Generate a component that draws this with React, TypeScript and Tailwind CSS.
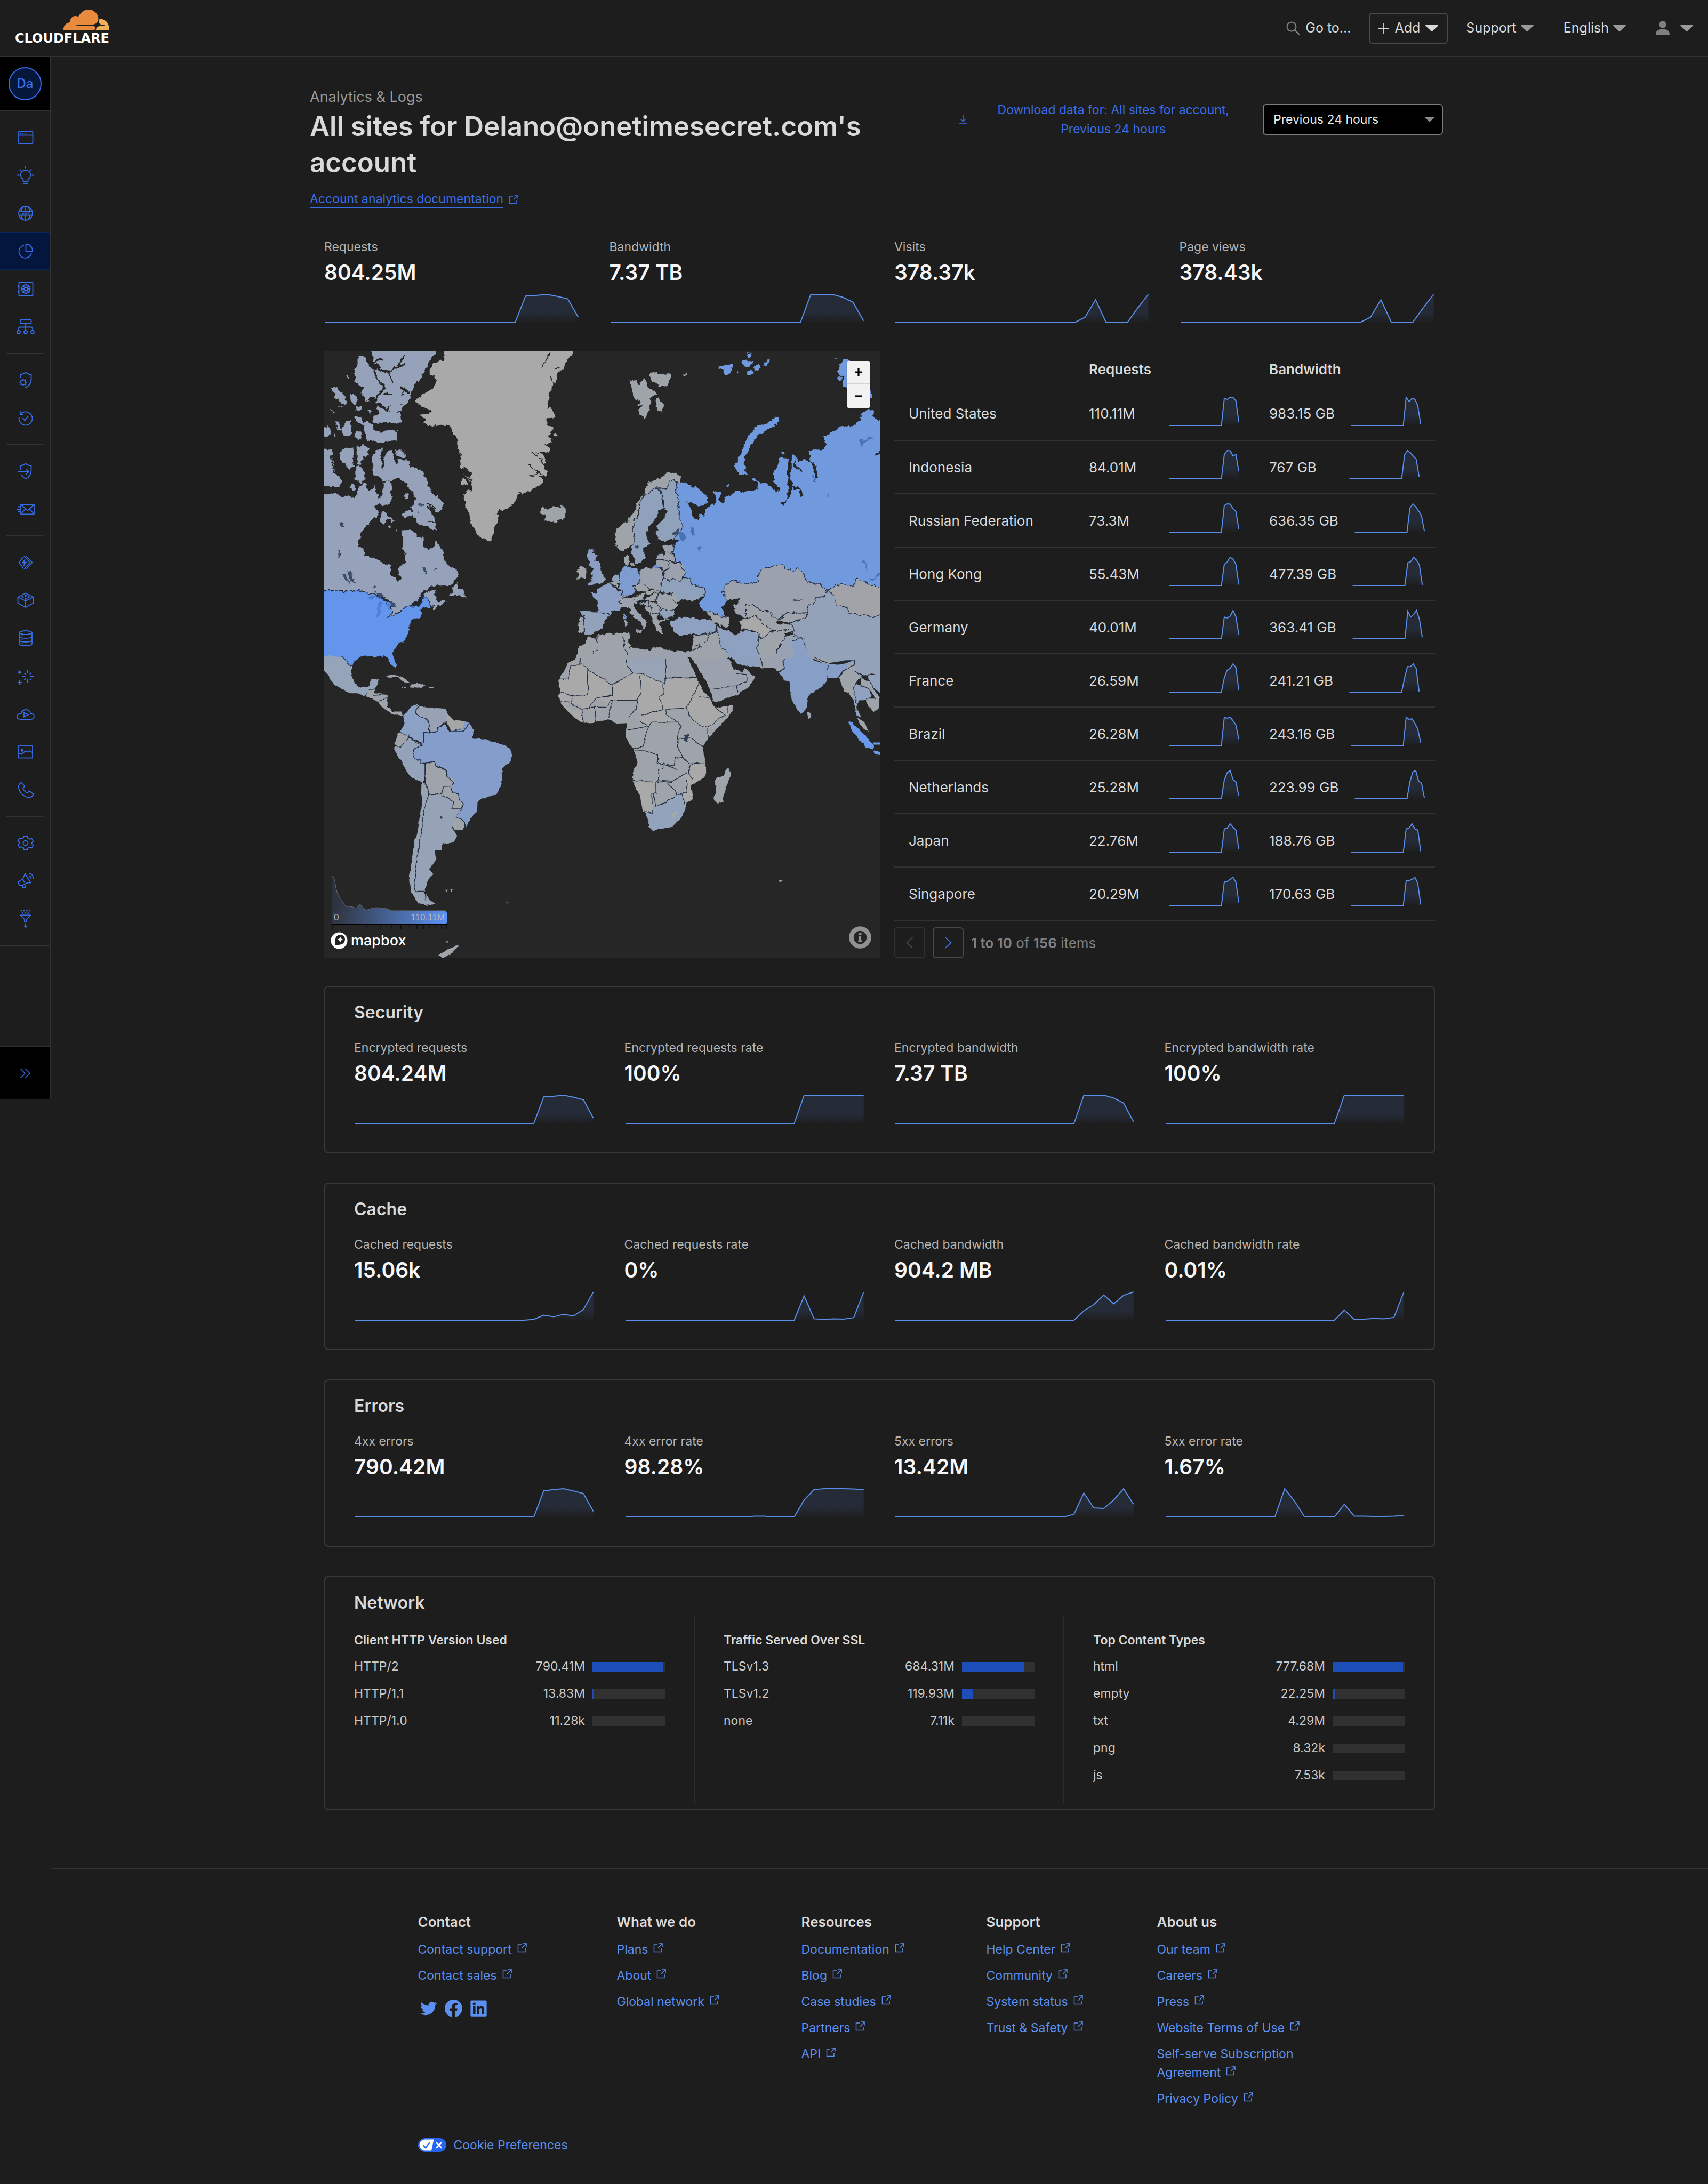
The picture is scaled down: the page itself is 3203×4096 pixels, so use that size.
import React, { useId } from "react";

/* ---------------------------------------------------------------- icons */

function Triangle({ className }: { className: string }) {
  return (
    <svg viewBox="0 0 24 12" className={className} aria-hidden="true">
      <path d="M1 0h22c1 0 1.200 .8.600 1.400L13 11.400c-.6.600-1.400.600-2 0L.400 1.400C-.2.800 0 0 1 0Z" fill="currentColor" />
    </svg>
  );
}

function External({ className }: { className: string }) {
  return (
    <svg viewBox="0 0 18 18" className={className} fill="none" stroke="currentColor" strokeWidth="1.5" aria-hidden="true">
      <path d="M8 3H1.500v13.500H15V10M10.500 1H17v6.500M17 1 9 9.500" />
    </svg>
  );
}

function Glyph({ children }: { children: React.ReactNode }) {
  return (
    <svg viewBox="0 0 40 40" className="size-10" fill="none" stroke="currentColor" strokeWidth="1.8" aria-hidden="true">
      {children}
    </svg>
  );
}

const navGroups: { label: string; icon: React.ReactNode; active?: boolean }[][] = [
  [
    {
      label: "Websites",
      icon: (
        <>
          <rect x="7" y="8.500" width="26.500" height="23" rx="1" />
          <path d="M7 15.500h26.500" />
          <path d="M10 12h2M14 12h2M18 12h2" />
        </>
      ),
    },
    {
      label: "Discover",
      icon: (
        <>
          <path d="M15.500 31.500h9v-4c2.500-2 5-4.500 5-8.500a9.500 9 0 0 0-19 0c0 4 2.500 6.500 5 8.500ZM16 36h8M20 3v4.500M4 19.500h4.500M31.500 19.500H36M8.700 8.500l3 2.700M31.300 8.500l-3 2.700" />
        </>
      ),
    },
    {
      label: "Domain Registration",
      icon: (
        <>
          <circle cx="20" cy="20" r="13" />
          <path d="M7.500 16.500h25M7.500 23.500h25M20 7v9.500M20 23.500V33M16 7.500c-2 2-3.500 5-4 9M24 7.500c2 2 3.500 5 4 9M12 23.500c.5 4 2 7 4 9M28 23.500c-.5 4-2 7-4 9" />
          <path strokeWidth="1" d="m13.500 18.700 1 2.500 1-2.500 1 2.500 1-2.500m1 0 1 2.500 1-2.500 1 2.500 1-2.500m1 0 1 2.500 1-2.500 1 2.500 1-2.500" />
        </>
      ),
    },
    {
      label: "Analytics & Logs",
      active: true,
      icon: (
        <>
          <path d="M20.500 7v13H33c0-8-5.500-13-12.500-13Z" strokeLinejoin="round" />
          <path d="M17 9.200A12 12 0 1 0 31 24" />
        </>
      ),
    },
    {
      label: "Security Center",
      icon: (
        <>
          <rect x="7.500" y="7" width="26" height="26" rx="1" />
          <circle cx="20.500" cy="20" r="8" />
          <circle cx="20.500" cy="20" r="3" />
          <path d="M20.500 12v5M20.500 23v5M12.500 20h5M23.500 20h5M15 14.500l3.200 3.200M26 14.500l-3.200 3.200M15 25.500l3.200-3.200M26 25.500l-3.200-3.200M6.500 12.500v5M6.500 22.500v5" />
        </>
      ),
    },
    {
      label: "Network",
      icon: (
        <>
          <rect x="10" y="6.500" width="20.500" height="7.500" rx="2" />
          <path d="M20 14v13M7 27v-4c0-2 .5-2.500 2.500-2.500h21c2 0 2.500.5 2.500 2.500v4" />
          <circle cx="7" cy="30" r="3" />
          <circle cx="20" cy="30" r="3" />
          <circle cx="33" cy="30" r="3" />
        </>
      ),
    },
  ],
  [
    {
      label: "Account Security",
      icon: (
        <>
          <path d="M10 16v-6.500c4-.5 7-1.500 10-4 3 2.500 6 3.500 10.500 4V18c0 8-4.500 13.500-12 16" />
          <circle cx="15.500" cy="24" r="4.500" />
          <path strokeWidth="2.200" d="M15.500 17v2.500M15.500 28.500V31M8.500 24H11M20 24h2.500M10.500 19l1.800 1.800M18.700 27.200l1.800 1.800M10.500 29l1.800-1.800M18.700 20.800l1.800-1.800" />
        </>
      ),
    },
    {
      label: "Turnstile",
      icon: (
        <>
          <path d="M10 13.500h5.500M9.800 7v6.800M10 13.500a12.500 12.500 0 1 1-2.200 5" />
          <path d="m14.500 20 4 4.500 7-8.500" />
        </>
      ),
    },
  ],
  [
    {
      label: "Zero Trust",
      icon: <path d="M10 17V9.500c4-.5 7-1.500 10-4 3 2.500 6 3.500 10.500 4V18c0 8-4 13.500-10.500 16-4-2-6.500-4.500-8-8M6 20.500h20M21 15.500l5 5-5 5" />,
    },
    {
      label: "Email",
      icon: (
        <>
          <rect x="11" y="11" width="25" height="18.500" rx="1" />
          <path d="m11.500 11.500 12.300 11 12-11M11.500 29l8-9.500M35.500 29l-8-9.500M6 15.500h4M3 20h6M5 25h5" />
        </>
      ),
    },
  ],
  [
    {
      label: "Workers & Pages",
      icon: (
        <>
          <path d="M15.500 10 7.500 20l8 10M21 8l11.500 12L21 32M17 8l11 12-11 12" />
          <path d="m18.500 14-5 7h4l-1 5.500 5-7.500h-4Z" fill="currentColor" strokeWidth="1" />
        </>
      ),
    },
    {
      label: "Vectorize",
      icon: (
        <>
          <path d="M20 6.500 34.500 14v11L20 33 5.500 25V14ZM5.500 14 20 21l14.500-7M20 21v12" />
          <g fill="currentColor" stroke="none">
            <circle cx="20" cy="11" r="2" />
            <circle cx="14.500" cy="14" r="2" />
            <circle cx="25.500" cy="14" r="2" />
            <circle cx="20" cy="17" r="2" />
          </g>
        </>
      ),
    },
    {
      label: "R2",
      icon: (
        <>
          <ellipse cx="20" cy="9.500" rx="12" ry="3.500" />
          <path d="M8 9.500v21c0 2 5 3.500 12 3.500s12-1.500 12-3.500v-21M8 16.500c0 2 5 3.500 12 3.500s12-1.500 12-3.500M8 23.500c0 2 5 3.500 12 3.500s12-1.500 12-3.500" />
          <path d="M12.500 15.500h2M12.500 22.500h2M12.500 29.500h2" />
        </>
      ),
    },
    {
      label: "AI",
      icon: (
        <path d="M24 8.500v6.500M24 25.500V32M13 20.500h6.500M29 20.500h6.500M17.500 14l2.500 2.500M30.500 14 28 16.500M17.500 27l2.500-2.500M30.500 27 28 24.500M9 9.500V16M5.700 12.700h6.600M9 28v8M5 32h8" strokeWidth="2.200" />
      ),
    },
    {
      label: "Stream",
      icon: (
        <>
          <path d="M10.500 30C6.500 30 4 28 4 25s2.500-5.500 6-5.500h1.500c1.500-5 5-7.500 9-7.500s7.500 2.500 9 7c4 0 6.500 2.500 6.500 5.500 0 3.500-2.500 5.500-6 5.500Z" />
          <path d="M17 17.500v8l8-4Z" />
        </>
      ),
    },
    {
      label: "Images",
      icon: (
        <>
          <rect x="7" y="9" width="26" height="22.500" />
          <circle cx="13.500" cy="17" r="1.800" fill="currentColor" />
          <path d="m7.500 23 5 1.500 7-6 4.500 2 3-2.500 6 3.500" />
        </>
      ),
    },
    {
      label: "Calls",
      icon: <path d="m12 6.500 6.500 7-3.500 4c1.500 4 4 6.500 8 8.500l4-3.500 8 6c-2.500 4.500-6.500 7-12 5.500C14 31.500 8 24 6.700 15 6.500 11 9 8.500 12 6.500Z" strokeLinejoin="round" />,
    },
  ],
  [
    {
      label: "Manage Account",
      icon: (
        <>
          <path strokeLinejoin="round" d="M17 7h6l1.200 4.200 3 1.600 4.300-1.200 3 5-3 3.200v1.400l3 3.200-3 5-4.300-1.200-3 1.600L23 33h-6l-1.200-4.200-3-1.600-4.300 1.200-3-5 3-3.200v-1.400l-3-3.200 3-5 4.300 1.200 3-1.600Z" />
          <circle cx="20" cy="20" r="4.500" />
        </>
      ),
    },
    {
      label: "Notifications",
      icon: (
        <>
          <path d="m19 6.500 10.500 17c-6-.5-10 1-14.500 4.500H8l-2-6 8.500-5ZM14.500 17l4 6.500M13 28l2 5 4.500-1-1-5.500" strokeLinejoin="round" />
          <path d="M27 6.500c4.500 0 7.500 4 7.500 10M26 11c3 0 4.500 2.500 4.500 5" />
        </>
      ),
    },
    {
      label: "Bulk Redirects",
      icon: (
        <>
          <path d="M11 13.500h18l-7 8V26h-4v-4.500ZM20 28.500v7M17.500 33l2.500 3 2.500-3" />
          <path strokeWidth="2.600" strokeDasharray="2.600 2.600" d="M10.700 5h20M13.300 9.500h15" />
        </>
      ),
    },
  ],
];

/* ------------------------------------------------------------- sparkline */

/* Values run from 0 to 1 and fill the end of a 24-step series. */
function Sparkline({ tail, className }: { tail: number[]; className: string }) {
  const id = useId();
  const w = 480;
  const top = 3;
  const base = 56;
  const step = (w - 5) / 24;
  const start = 25 - tail.length;
  const pts = tail.map((v, i) => `${(2 + (start + i) * step).toFixed(1)},${(base - v * (base - top)).toFixed(1)}`);
  const line = `M2,${base} L${(2 + (start - 1) * step).toFixed(1)},${base} L${pts.join(" L")}`;
  return (
    <svg viewBox={`0 0 ${w} 58`} preserveAspectRatio="none" className={className} aria-hidden="true">
      <defs>
        <linearGradient id={id} x1="0" y1="0" x2="0" y2="58" gradientUnits="userSpaceOnUse">
          <stop offset="0" stopColor="#5b93f5" stopOpacity="0.12" />
          <stop offset="0.65" stopColor="#5b93f5" stopOpacity="0.12" />
          <stop offset="1" stopColor="#5b93f5" stopOpacity="0" />
        </linearGradient>
      </defs>
      <path d={`${line} L${w - 3},${base} Z`} fill={`url(#${id})`} />
      <path d={line} fill="none" stroke="#5b8ee8" strokeWidth="2" vectorEffect="non-scaling-stroke" />
    </svg>
  );
}

/* ------------------------------------------------------------------ data */

type Metric = { label: string; value: string; tail: number[] };

const reqTail = [0, 0.94, 0.96, 1, 0.93, 0.84, 0.19];
const bwTail = [0, 1, 1, 1, 0.9, 0.72, 0.06];
const visitTail = [0, 0.19, 0.81, 0, 0, 0, 0.52, 1];

const totals: Metric[] = [
  { label: "Requests", value: "804.25M", tail: reqTail },
  { label: "Bandwidth", value: "7.37 TB", tail: bwTail },
  { label: "Visits", value: "378.37k", tail: visitTail },
  { label: "Page views", value: "378.43k", tail: visitTail },
];

const cards: { title: string; metrics: Metric[] }[] = [
  {
    title: "Security",
    metrics: [
      { label: "Encrypted requests", value: "804.24M", tail: reqTail },
      { label: "Encrypted requests rate", value: "100%", tail: [0, 1, 1, 1, 1, 1, 1, 1] },
      { label: "Encrypted bandwidth", value: "7.37 TB", tail: bwTail },
      { label: "Encrypted bandwidth rate", value: "100%", tail: [0, 1, 1, 1, 1, 1, 1, 1] },
    ],
  },
  {
    title: "Cache",
    metrics: [
      { label: "Cached requests", value: "15.06k", tail: [0, 0.03, 0.18, 0.12, 0.21, 0.15, 0.38, 1] },
      { label: "Cached requests rate", value: "0%", tail: [0, 0.86, 0.05, 0.03, 0.05, 0.04, 0.09, 1] },
      { label: "Cached bandwidth", value: "904.2 MB", tail: [0, 0.33, 0.55, 0.89, 0.58, 0.88, 1] },
      { label: "Cached bandwidth rate", value: "0.01%", tail: [0, 0.36, 0.03, 0.04, 0.06, 0.05, 0.1, 1] },
    ],
  },
  {
    title: "Errors",
    metrics: [
      { label: "4xx errors", value: "790.42M", tail: [0, 0.92, 0.97, 1, 0.92, 0.83, 0.2] },
      { label: "4xx error rate", value: "98.28%", tail: [0, 0.03, 0.03, 0, 0, 0, 0.6, 0.97, 1, 1, 1, 0.99, 0.96] },
      { label: "5xx errors", value: "13.42M", tail: [0, 0.1, 0.85, 0.32, 0.3, 0.6, 1, 0.45] },
      { label: "5xx error rate", value: "1.67%", tail: [0, 1, 0.55, 0, 0, 0, 0, 0.45, 0.03, 0.03, 0.02, 0.02, 0.03, 0.05] },
    ],
  },
];

const countries: { name: string; req: string; bw: string; a: number[]; b: number[] }[] = [
  { name: "United States", req: "110.11M", bw: "983.15 GB", a: [0, 0.96, 0.92, 1, 0.99, 0.87, 0.12], b: [0, 1, 0.85, 0.95, 0.93, 0.7, 0.04] },
  { name: "Indonesia", req: "84.01M", bw: "767 GB", a: [0, 0.86, 1, 0.99, 0.81, 0.86, 0.26], b: [0, 0.85, 1, 0.92, 0.8, 0.7, 0.08] },
  { name: "Russian Federation", req: "73.3M", bw: "636.35 GB", a: [0, 0.94, 1, 0.99, 0.83, 0.73, 0.1], b: [0, 0.85, 1, 0.9, 0.75, 0.58, 0.03] },
  { name: "Hong Kong", req: "55.43M", bw: "477.39 GB", a: [0, 0.75, 0.83, 1, 0.93, 0.75, 0.03], b: [0, 0.8, 0.84, 1, 0.9, 0.73, 0.02] },
  { name: "Germany", req: "40.01M", bw: "363.41 GB", a: [0, 0.77, 0.74, 0.8, 1, 0.78, 0.15], b: [0, 0.97, 0.77, 0.86, 1, 0.7, 0.05] },
  { name: "France", req: "26.59M", bw: "241.21 GB", a: [0, 0.51, 0.78, 0.84, 1, 0.87, 0.06], b: [0, 0.5, 0.9, 0.9, 1, 0.84, 0.02] },
  { name: "Brazil", req: "26.28M", bw: "243.16 GB", a: [0, 1, 0.96, 1, 0.87, 0.72, 0.22], b: [0, 1, 0.92, 0.94, 0.78, 0.58, 0.1] },
  { name: "Netherlands", req: "25.28M", bw: "223.99 GB", a: [0, 0.67, 0.92, 1, 0.68, 0.6, 0.1], b: [0, 0.6, 0.95, 1, 0.62, 0.55, 0.02] },
  { name: "Japan", req: "22.76M", bw: "188.76 GB", a: [0, 0.82, 0.85, 1, 0.88, 0.78, 0.1], b: [0, 0.82, 0.85, 1, 0.82, 0.78, 0.03] },
  { name: "Singapore", req: "20.29M", bw: "170.63 GB", a: [0, 0.83, 0.85, 0.92, 1, 0.82, 0.1], b: [0, 0.88, 0.88, 0.92, 1, 0.78, 0.03] },
];

const network: { title: string; rows: [string, string, number][] }[] = [
  { title: "Client HTTP Version Used", rows: [["HTTP/2", "790.41M", 98], ["HTTP/1.1", "13.83M", 2], ["HTTP/1.0", "11.28k", 0]] },
  { title: "Traffic Served Over SSL", rows: [["TLSv1.3", "684.31M", 85], ["TLSv1.2", "119.93M", 15], ["none", "7.11k", 0]] },
  { title: "Top Content Types", rows: [["html", "777.68M", 97], ["empty", "22.25M", 3], ["txt", "4.29M", 0], ["png", "8.32k", 0], ["js", "7.53k", 0]] },
];

const footer: { title: string; links: string[] }[] = [
  { title: "Contact", links: ["Contact support", "Contact sales"] },
  { title: "What we do", links: ["Plans", "About", "Global network"] },
  { title: "Resources", links: ["Documentation", "Blog", "Case studies", "Partners", "API"] },
  { title: "Support", links: ["Help Center", "Community", "System status", "Trust & Safety"] },
  { title: "About us", links: ["Our team", "Careers", "Press", "Website Terms of Use", "Self-serve Subscription Agreement", "Privacy Policy"] },
];

/* ------------------------------------------------------------------- map */

type Shape = [fill: string, d: string];

const CA = "#95a2b9";
const US = "#6495ec";
const RU = "#7099de";
const G1 = "#a9a9a9";
const G2 = "#9fa4ab";
const G3 = "#9ba2ad";
const SEA = "#262626";

const northWest: Shape[] = [
  [G1, "M695,10H1410L1412,45 1375,75 1372,98 1350,120 1325,145 1305,180 1300,215 1280,240 1275,300 1268,320 1290,305 1312,340 1312,362 1265,365 1270,400 1295,410 1297,440 1278,455 1300,490 1258,500 1283,520 1283,540 1200,540 1240,548 1258,570 1255,600 1267,625V660H1220L1255,680 1200,727 1128,752 1112,740 1115,755 1098,770 1088,800 1040,832 1005,838 988,855 998,870 990,900 967,922 970,945 955,998 938,990 890,972 865,940 840,895 830,850 808,810 806,770 818,735 850,735V690L800,655 845,665V640L780,615 778,575 792,560 775,525 765,480 740,430 720,408 690,395 610,408 580,385 590,370 555,350 628,330 605,315 565,305 533,280 540,260 610,225 638,205 650,170 640,150 612,145V120L640,80 680,65 690,75Z"],
  [G1, "M790,672 830,690 825,700 795,705ZM1290,150h35l-5,25h-25ZM1308,445h14l5,15h-18Z"],
  [CA, "M285,10H655L600,90 580,125 555,170 520,195 505,240 490,290 455,295V330L400,335 385,325 392,290 370,322 355,300 310,280 305,262 280,258 270,280 250,275 228,230 240,205 210,200 190,160 195,115 210,75 225,45 250,60 275,100 300,118 340,105 300,80Z"],
  [CA, "M60,210 85,203 100,225 125,235 150,290 135,300 115,280 90,270 70,265 85,240ZM165,240 195,250 210,280 190,300 170,280ZM195,308h40v14h-40ZM140,148l15,-2v22ZM55,310l20,35-10,-5ZM268,318l18,8-8,14ZM105,300l20,2-8,8Z"],
  [CA, "M315,300 340,310 365,330 400,328 450,345 455,380 425,395 400,385 290,385 300,355 330,345ZM188,355 230,358 235,385 265,380 290,400 300,425 335,440 380,422 430,430V480L310,487 260,475 250,440 240,395 200,380Z"],
  [CA, "M78,378 110,390 100,400 125,420 140,380 170,375 172,450 135,460 125,430 95,425ZM10,408H40L58,415 52,455 20,462 0,462ZM195,435l30,0 6,40-25,0-15,-20ZM70,445l12,0 2,12-10,0Z"],
  [CA, "M110,545 125,520 180,515 188,610 160,628 130,590 105,570ZM205,510 240,503 275,515 255,565 232,570 225,600 205,598ZM10,520 70,525 60,560 20,540 60,555 75,600 80,640 120,680 108,715 60,715 45,705 10,725Z"],
  [CA, "M195,615 215,605 240,630 250,680 225,695 195,680ZM158,720l25,-25 15,30-15,10Z"],
  [CA, "M290,560 310,525 355,520 335,555 345,610 355,630 355,570 370,535 405,525 420,600 440,575 480,575 500,610 545,620 575,640 600,680 605,720 690,800 665,850 600,810 640,880 650,940 590,915 545,905 520,860 470,875 455,855 475,840 520,840 510,815 535,780 500,720 455,685 440,665 400,690 350,680 320,670 300,650 290,610ZM415,525 465,530 482,562 430,565Z"],
  [CA, "M470,750 490,745 497,770 475,780ZM350,690 385,690 400,710 395,760 405,775 375,805 345,810 325,800 345,760ZM345,840 370,850 380,870 415,885 405,895 385,880 350,905 330,895ZM375,920 395,918 380,935ZM425,935l10,0-2,15Z"],
  [CA, "M0,760 60,740 110,765 165,762 195,768 205,745 235,700 250,695 275,735 300,710 310,740 325,780 340,760 335,800 300,815 325,845 315,875 280,888 272,910 245,925 220,970 213,1025 240,1030 245,1068 300,1080 355,1110 393,1115V1165L430,1198 448,1185 440,1125 475,1100 478,1060 455,1025 465,990 455,935 515,935 545,965 575,975 578,1020 610,1040 630,1030 648,988 685,1050 690,1080 715,1115 770,1145 775,1180 715,1220H620L575,1255 550,1290 500,1325 440,1350 385,1380 380,1300 350,1275 300,1262 215,1250 0,1250Z"],
  [CA, "M765,1200 770,1235 800,1245 815,1280 795,1280 770,1270 725,1272ZM575,1280 600,1250 635,1243 650,1250 640,1275 655,1300 705,1295 690,1315 655,1325 640,1347 628,1340 635,1322 605,1320 600,1285Z"],
  [US, "M0,1246H212L300,1265 355,1290 390,1315 400,1350 385,1380 440,1358 500,1323 545,1322 565,1310 580,1278 602,1280 612,1325 560,1345 565,1385 510,1395 490,1450 485,1490 440,1520 410,1545 405,1580H0Z"],
  ["#4d7fd6", "M252,1290 275,1272 300,1278 335,1275 355,1292 320,1290 300,1288ZM318,1310 340,1302 360,1308 340,1320 332,1380 316,1380ZM370,1310 390,1320 392,1348 378,1345Z"],
  ["#3c4d68", "M300,1248 340,1255 358,1285 330,1275ZM385,1300 415,1305 425,1330 400,1325ZM150,1145 170,1148 190,1190 185,1215 165,1190ZM122,1160 145,1165 165,1218 145,1195ZM95,1085 105,1045 118,1050 108,1075ZM108,905l22,-8-2,20-12,5ZM552,795l30,8-22,18ZM545,845l18,15-20,0ZM565,1125 590,1135 600,1160 580,1148ZM640,1130l25,10-30,2ZM298,1222l14,0 0,14-14,0Z"],
  [G2, "M1235,825 1245,812 1270,835 1300,818 1340,820 1352,808 1380,845 1365,875 1310,898 1275,892 1255,885 1262,860 1235,855Z"],
  ["#8b9fc4", "M1500,1040 1532,1033 1525,1055 1550,1065 1540,1095 1565,1110 1580,1200 1530,1215 1500,1222 1525,1195 1505,1190 1525,1175 1515,1160 1535,1130 1505,1115 1510,1095 1495,1070Z"],
  [G2, "M1435,1140 1460,1118 1490,1130V1160L1480,1180 1435,1190 1450,1160Z"],
  ["#8ba0c4", "M1512,1258 1545,1262 1555,1240 1580,1245V1370L1560,1350 1562,1300 1520,1265Z"],
  ["#93a2bb", "M1450,1352 1480,1347 1580,1355V1440L1555,1450 1520,1470 1490,1475 1475,1455 1470,1380Z"],
  [G2, "M1452,1378 1485,1380 1478,1400 1475,1430 1473,1460H1452L1446,1435Z"],
  [G2, "M1440,1590 1445,1535 1480,1515 1495,1485 1580,1490V1590Z"],
];

const northEast: Shape[] = [
  [G2, "M162,175 195,170 210,190 240,160 255,200 280,215 305,245 275,255 265,320 242,373 225,350 205,325 235,300 205,295 220,275 190,270 175,230ZM265,150 285,125 325,140 375,138 388,160 360,205 325,200 280,175ZM300,260l18,0 8,25 20,12-12,35-28,-12ZM455,140l15,-8 0,10-18,6Z"],
  [RU, "M642,105 680,90 685,95 715,83 728,100 700,135 680,145 665,130 675,112ZM770,70 800,68 825,75 820,98 795,103 770,90ZM800,35l18,-5 5,20-20,10ZM838,95l25,-8 12,15-20,20-15,-5ZM885,85 905,80 910,60 920,75 905,98 885,98ZM795,130l25,-12 10,8-15,15-20,5ZM745,128l12,0 0,10-12,0ZM1270,60l12,0 0,8Z"],
  [RU, "M968,365 960,355 935,365 930,380 885,400 860,400 820,435 800,470 780,500 765,525 775,545 750,560 745,590 730,605 735,625 760,650 808,656 790,630 782,590 785,560 800,545 815,505 850,460 880,435 940,405 965,390Z"],
  [RU, "M1340,55 1365,80 1400,100 1475,240 1475,265 1440,255 1335,215 1315,190 1325,160 1290,130 1305,85ZM1283,155l25,-5 5,20-20,5ZM830,665l22,20-8,8-18,-15ZM685,705l15,-5 5,12-15,10ZM985,540l15,-4 5,12-15,5Z"],
  [RU, "M415,695 460,690 480,710 520,715 560,745 583,770V795L560,815 530,812 480,795 462,785 490,815 500,865 530,885 540,880 530,855 570,860V835L600,800 625,815 628,790 615,735 655,745 650,770 640,785 665,795 690,760 750,735 775,740 805,738 845,735 858,715 855,688 900,700 965,740 972,725 945,690 940,635 965,615 975,565 1022,568 1045,555 1060,565 1080,590 1100,580 1135,585 1132,530 1210,525 1225,500 1215,460 1265,430 1320,405 1375,405 1400,385 1418,380 1420,345 1450,320 1485,325 1480,350 1505,375 1540,370V1240L1480,1220 1450,1220 1430,1200 1390,1185 1375,1225 1300,1210 1235,1243 1210,1235 1175,1208 1125,1205 1105,1165 1075,1132 1045,1150 1030,1135 1000,1135 995,1110 965,1115 865,1140 850,1185 868,1200 840,1212 775,1208 720,1190 690,1210 670,1225 662,1250 680,1275 690,1295 660,1330 680,1385 640,1370 610,1355 575,1350 540,1325V1300L565,1275 567,1235 500,1215 485,1180 450,1180 465,1155 440,1125 438,1100 405,1095 398,1060 400,1010 430,995 405,975 425,955 450,915 430,885V850L418,800 428,770 410,740Z"],
  [G2, "M440,665 400,640 370,645 340,665 300,680 260,700 240,735 225,770 205,790 190,830 150,890 110,910 82,940 80,1000 100,1040 130,1045 165,1015 178,1005 185,960 178,920 185,885 205,880 200,860 215,800 240,750 265,750 270,735 300,730 310,712 330,730 365,725 372,690 395,680 415,690 430,700Z"],
  ["#90a1bc", "M300,715 335,750 342,825 315,835 308,870 260,915 250,960 255,985 272,1000 240,1030 238,1085 210,1107 192,1105 188,1080 170,1050 172,1020 185,960 178,920 185,885 205,875 215,800 240,750 265,750 270,735Z"],
  ["#90a1bc", "M345,828 338,750 310,715 345,730 365,728 372,690 398,680 415,695 410,740 428,770 418,800 430,850V885L450,915 425,955 400,980 345,995 310,985 305,915 345,880 365,850 360,830Z"],
  [G3, "M340,1018 395,1010 392,1058 345,1048ZM305,1068 330,1060 350,1065 355,1052 392,1060 402,1092 380,1098 345,1088 305,1088ZM305,1092 345,1088 380,1100 370,1130 345,1140 325,1120 300,1115ZM380,1100 440,1103 462,1155 440,1195 345,1188 342,1145 372,1135ZM210,1145 235,1132 335,1130 340,1185 330,1248 270,1235 215,1210Z"],
  [RU, "M290,1125 308,1113 328,1120V1132H290Z"],
  ["#7f9cd0", "M135,1120 165,1130 205,1132 212,1205 180,1222 195,1255 150,1275 118,1272 120,1245 98,1230 105,1155Z"],
  [G2, "M125,1085 150,1060 155,1090 148,1118 130,1115ZM160,1102l22,-5 5,15-20,8Z"],
  ["#8ba0c4", "M-15,1240 45,1205 95,1245 122,1245 118,1272 98,1300 115,1335 100,1352 60,1352 55,1368 -15,1362Z"],
  ["#93a2bb", "M-15,1365 50,1368 20,1410 -15,1445ZM-15,1150 10,1160 30,1190 20,1205 -15,1208ZM65,1195 78,1165 105,1155 100,1205Z"],
  [G2, "M45,1205 90,1200 95,1232ZM98,1300 118,1272 150,1278 190,1290 155,1300 125,1308ZM185,1220 210,1208 270,1235 265,1250 200,1250ZM165,1285 245,1255 240,1290 200,1298ZM250,1250 290,1238 325,1245 318,1258 250,1262ZM240,1290 260,1270 320,1260 305,1295 270,1300Z"],
  [G3, "M108,1310 150,1290 200,1295 205,1310 182,1310 185,1340 215,1360 250,1408 245,1440 235,1440 225,1410 180,1380 155,1335 105,1335ZM185,1450 230,1445 225,1462ZM130,1400 142,1392 145,1425 132,1430Z"],
  ["#7f9cd0", "M130,1370 140,1363 142,1385 134,1388Z"],
  [G2, "M205,1310 275,1300 320,1315 330,1345 310,1380 325,1400 345,1385 370,1390 330,1405 320,1420 342,1465 318,1465 290,1420 275,1375 235,1325ZM300,1295 325,1262 385,1265 410,1310 430,1310 405,1345 325,1345Z"],
  ["#93a2bb", "M330,1345 405,1342 395,1378 345,1388 325,1370Z"],
  ["#90a1bc", "M342,1190 440,1195 455,1180 485,1182 500,1215 567,1238 565,1268 535,1285 500,1300 450,1290 425,1305 400,1258 330,1255 325,1240Z"],
  [G2, "M385,1262 405,1260 430,1300 405,1310Z"],
  ["#8ea1c0", "M380,1405 410,1390 460,1385 520,1390 590,1395 615,1400 630,1455 590,1465 480,1470 430,1475 395,1455 385,1430Z"],
  [G2, "M575,1350 640,1365 680,1385 695,1385 700,1430 685,1435 650,1420 620,1410ZM510,1475 640,1462 655,1500 700,1560V1590H490Z"],
  ["#8ea1c0", "M628,1422 690,1450 730,1468 790,1445 862,1470V1590H700L655,1530 640,1465Z"],
  [G3, "M690,1210 720,1190 775,1208 840,1212 868,1200 850,1185 865,1140 965,1115 995,1110 1000,1135 1030,1135 1045,1150 1075,1132 1105,1165 1125,1205 1175,1208 1232,1243 1195,1285 1165,1285 1155,1318 1125,1325 1130,1358 1055,1362 1010,1360 965,1395 935,1385 920,1350 870,1348 825,1312 790,1320V1390L770,1378 735,1365 725,1325 753,1310 750,1285 690,1295 680,1275 662,1250 670,1225Z"],
  [G2, "M790,1320 825,1312 870,1348 920,1350 935,1385 965,1395 955,1420 980,1440 940,1450 880,1410 845,1375 790,1390ZM1010,1360 1130,1358 1125,1375 1040,1412 965,1398ZM955,1415 1035,1420 1052,1460 955,1455Z"],
  [G1, "M752,1390 790,1390 830,1365 880,1410 940,1450 875,1488 840,1455 790,1443 762,1450 765,1420Z"],
  [G2, "M862,1470 875,1488 935,1455 955,1455 1005,1442 1005,1480 960,1545 950,1590H868L855,1530Z"],
  ["#a1a3a8", "M1238,1243 1300,1210 1375,1225 1390,1185 1430,1200 1480,1220 1540,1235V1370L1475,1383 1440,1370 1355,1363 1335,1330 1278,1320 1270,1270Z"],
  ["#93a2b9", "M1235,1243 1270,1270 1278,1320 1335,1330 1355,1363 1440,1370 1475,1383 1540,1368V1590H1130L1110,1520 1080,1490 1052,1460 1035,1420 1130,1370 1125,1325 1155,1318 1165,1285 1195,1285Z"],
  ["#97a3b4", "M1005,1480 1052,1465 1080,1490 1110,1500 1115,1590H940Z"],
  ["#8a9fc3", "M1040,1500 1105,1490 1112,1540 1140,1590H1050Z"],
  [G2, "M-15,1475 30,1465 160,1462 155,1500 165,1530 145,1590H-15Z"],
  [G3, "M145,1545 200,1535 270,1555 290,1530 325,1535 360,1550 450,1555 495,1560V1590H140Z"],
  ["#4a72b5", "M425,950 455,955 468,980 445,995ZM488,920 505,925 518,965 495,955ZM532,1018l20,15-8,12ZM1405,465 1430,480 1470,460 1480,470 1430,490 1422,515ZM1150,650l30,40-20,-5ZM1225,770 1255,732 1235,768ZM1455,1190 1490,1180 1525,1135V1160L1480,1195ZM1415,1105 1440,1088 1455,1150 1435,1110Z"],
  ["#3c4d68", "M395,945 425,930 425,955 400,965ZM182,1025 205,1012 200,1035ZM1032,1315 1055,1292 1112,1292 1045,1302Z"],
];

const south: Shape[] = [
  ["#95a4b9", "M-5,-10H40L60,15 75,50 88,62 85,110 95,150 108,172 130,168 138,130 162,127 158,150 150,172 148,180H135L133,190 125,205 120,215 105,200 85,200 60,180 35,155 25,115 -5,65Z"],
  [US, "M38,-10 60,15 75,50 88,62 92,40 110,15 135,5 150,18 170,8 185,20 192,50 205,75 209,60 203,25 196,-10Z"],
  [G2, "M133,180 150,172 150,200 185,207 183,265 200,292 225,292 228,310 205,310 175,280 160,245 125,215ZM180,113 200,105 225,120 248,148 232,145 210,118 185,118ZM250,152 275,150 292,165 270,172 248,168ZM225,170h10v5h-10ZM300,170h10v5h-10ZM345,1190l8,0-4,12ZM358,1188l8,0-5,14ZM1263,1138l12,4-8,12ZM510,1245l6,5 5,12Z"],
  ["#8ca1c6", "M250,268 268,250 265,275 262,300 272,320 297,335 300,400 283,395 285,450 245,420 218,395 230,365V310Z"],
  ["#98a2b4", "M268,255 285,270 345,278 350,310 345,350 322,370V395L308,400 300,380 297,335 272,320 262,300Z"],
  ["#a5a6a6", "M350,305 370,335 398,340 395,378 372,380 362,393 352,360 345,340Z"],
  [G2, "M215,398 243,410 240,430 218,472 205,455Z"],
  ["#94a3ba", "M205,465 218,472 243,425 270,445 280,462 260,475 255,510 275,540 288,560V620L282,652 250,620 238,595 220,530 205,495Z"],
  ["#859dca", "M285,395 310,400 322,393 325,370 345,358 355,390 372,385 392,378 396,342 412,352 422,390 418,425 460,435 500,455 525,480 529,520 520,550 502,580 500,650 488,700 480,715 455,722 433,750 432,795 415,830 402,875 398,850 372,820 390,785 395,755 380,735V705H365L360,670 368,650 348,615V590L318,565 312,540 290,555H275V535H262L255,510 262,475 280,462 278,445 285,440Z"],
  [G2, "M290,558 313,540 318,570 348,595V620L367,630 362,668 340,670 333,705 300,715 290,650ZM338,670 360,668 365,705H380L383,738 395,755 388,780 362,778 368,750 335,710ZM370,820 398,850 392,890 368,888 362,860Z"],
  ["#96a2b6", "M300,710 333,705 368,748 362,778 390,780 372,820 362,880 375,920 370,950 335,958V990H315L318,1035 308,1065 298,1085 310,1110 295,1150 288,1180 290,1200H262L258,1150 265,1050 272,950 280,880 283,780 290,750ZM290,1208 300,1240 318,1262H290Z"],
  ["#98a3b4", "M280,652 290,655 298,720 290,760 283,800 280,890 272,960 265,1060 258,1160 262,1200 288,1205 290,1262 300,1270 270,1260 250,1200 245,1130 250,1060 258,960 270,870 278,760Z"],
  [G1, "M712,-10 700,30 680,50 668,95 657,130 662,190 655,215 662,245 675,275 690,310 724,352 760,345 790,330 808,332 820,352 845,350 848,390 840,420 855,455 862,480 875,545 862,600 860,640 882,720 885,770 905,840V870L915,890 970,872 992,830 1008,780V750L1027,735 1022,665 1062,620V550L1055,510V470L1068,430 1110,350 1135,290 1138,258 1095,272 1083,262 1075,225 1058,195 1045,150 1035,110 1010,30 1005,-10Z"],
  [G2, "M712,-10H845V62L862,98 805,158 735,75 715,45 690,60 685,128 657,130 668,95 680,50 700,30ZM720,280 755,278 790,265 800,235 875,235 870,280 885,310 880,345 905,365 910,348 985,345 955,310V280L1010,275 1020,320 1045,362 1068,370 1110,320 1135,265 1138,290 1110,350 1068,430 1055,470 1060,555 1020,560 1015,600 990,615 1010,640 1005,700 985,708 940,760 925,770 918,705 925,645 860,640 862,600 875,545 862,480 840,420 848,350 820,352 790,330 724,352ZM745,270 760,225 790,245 780,268ZM675,255 715,250 720,290 690,285Z"],
  ["#98a3b5", "M845,-10H952V152L885,100 862,98 845,62Z"],
  [G3, "M952,-10H1005L1038,120H952Z"],
  ["#93a3bb", "M893,795 915,802 918,750 925,770 955,750 985,708 998,710 1003,760 1008,780 992,830 970,872 915,890 905,870V840Z"],
  [G1, "M968,812 978,798 986,805 975,828ZM860,640 925,645V705H918V800H905L893,790 882,720Z"],
  [G2, "M1125,570 1132,610 1118,680 1110,745 1095,752 1085,735 1090,700V630L1112,615Z"],
  [G3, "M1012,-10 1045,80 1070,160 1083,235 1090,245 1145,210 1185,165 1198,115 1172,75 1165,95 1140,80 1128,30 1105,-10Z"],
  ["#8da0be", "M1118,-10H1215L1222,70 1180,65 1150,50 1135,25Z"],
  [G3, "M1210,-10H1300L1275,35 1280,80 1260,90 1250,70 1215,72ZM1342,290 1352,300 1355,325 1345,332Z"],
  ["#93a2b9", "M1340,-10H1560V118L1520,100 1500,110 1470,90 1475,35 1450,35 1400,50 1360,25Z"],
  ["#879ec6", "M1300,-10H1345L1360,35 1405,55 1450,50 1470,30V55L1440,90 1430,120 1400,122 1392,150 1365,190 1345,215 1342,270 1325,305 1300,235 1292,140 1280,135 1265,95 1280,80 1275,35Z"],
  [G2, "M1345,0 1405,35 1400,55 1350,20ZM1470,30 1475,90 1495,115 1475,150 1470,170 1478,255 1455,195 1445,190 1432,120 1445,85ZM1490,115 1515,140 1540,215 1543,270 1525,295 1505,245 1505,225 1530,225 1515,180 1490,160ZM1480,322 1500,345 1512,395 1492,370Z"],
  ["#90a2bf", "M1478,150 1490,160 1515,180 1520,215 1500,235 1485,235 1478,270 1490,325 1478,310 1472,240 1470,170ZM1510,105 1560,105V220L1530,180 1515,145Z"],
  ["#6b98ea", "M1452,340 1465,345 1500,410 1525,460V485L1505,470 1480,420ZM1525,490 1550,500V514L1528,505ZM1525,448h25v8h-25Z"],
  [G2, "M335,1532 325,1520 350,1490 380,1470 370,1500 340,1532ZM345,1452h6v6h-6Z"],
  ["#33415a", "M1003,410 1018,405 1012,445 1002,440ZM328,820l10,5-6,8Z"],
];

const seaNorthEast =
  "M1015,625 1035,620 1030,665 1045,700 1035,750 1000,810 975,800 1010,790 1022,740ZM1040,715 1070,712 1095,735 1100,768 1088,768 1080,730 1045,725ZM1058,560 1065,610 1105,640 1075,630 1055,615ZM1130,580 1172,605 1178,665 1165,670 1158,615ZM1022,565 1040,560V620L1020,640ZM1490,550 1520,525 1540,530V550ZM725,1305 755,1285 750,1310 722,1330 745,1380 765,1390 760,1465 730,1468 695,1450 705,1400 665,1335Z";

const bordersNorthWest =
  "M20,1246H212L300,1265 355,1290 390,1315 400,1350 385,1380 440,1358 500,1323 545,1322 565,1310 580,1278 602,1280 612,1325M510,1318 560,1290 600,1250 620,1240M1452,1378 1485,1380 1478,1400 1475,1430 1473,1460M1450,1352 1480,1347 1568,1355M1545,1495 1560,1540 1520,1568";
const bordersNorthEast =
  "M415,695 410,740 428,770 418,800 430,850V885L450,915 425,955 405,975M395,1010 398,1060 405,1095 438,1100 440,1125 465,1155 450,1180 485,1180 500,1215 567,1235 565,1275 540,1300M680,1385 640,1370 575,1350M662,1250 670,1225 720,1190 775,1208 840,1212 868,1200 850,1185 865,1140 965,1115 995,1110 1000,1135 1030,1135 1045,1150 1075,1132 1105,1165 1125,1205 1175,1208 1235,1243 1300,1210 1375,1225 1390,1185 1430,1200 1480,1220 1520,1235M662,1250 690,1295M790,1390V1320L825,1312 870,1348 920,1350 935,1385 965,1395 1010,1360 1130,1358 1125,1325 1155,1318 1165,1285 1195,1285 1235,1243 1270,1270 1278,1320 1335,1330 1355,1363 1440,1370 1475,1383 1520,1370M762,1450 790,1443 840,1455 875,1488 940,1450 880,1410 845,1375 790,1390 755,1385M1130,1370 1040,1412 1052,1460 1005,1442 955,1455 940,1450M1005,1442V1480L960,1545 950,1568M855,1568V1530L862,1470M628,1422 640,1465 655,1530 700,1568M510,1475 630,1455 620,1410M515,1530 580,1505 590,1465M500,1550 550,1530 560,1568M345,1188 440,1195M342,1145 372,1135 382,1100 345,1088 305,1088M305,1068 345,1048M300,1128 335,1130 345,1140 340,1185 325,1248M210,1145 215,1210 180,1222 195,1255 150,1275 98,1300M215,1210 270,1235 325,1248 320,1260 300,1295 325,1345 405,1345M98,1230 120,1245 118,1272M105,1155 98,1230 45,1205M250,1255 240,1290 200,1298 205,1310 260,1300 275,1345M325,1262 385,1262 410,1310M230,1325 280,1325 270,1370M280,1370 320,1355 345,1388 380,1405M120,1465 125,1520 145,1568M300,715 335,750 342,825M345,828 338,750 310,715M0,1362 50,1368M178,1010 185,960 178,920 185,885 205,875 215,800 240,750 265,750 270,735 300,730 310,712 345,730 365,728 372,690 398,680 415,695M1040,1500 1105,1490 1115,1540M1035,1470 1080,1490";
const bordersSouth =
  "M38,0 60,15 75,50 88,62M133,180H150V172M145,210 185,207M160,240 183,225M275,250 262,300 272,320 297,335 300,400 283,395 285,450M245,405 240,430 218,472M243,425 280,462 260,475 255,510 262,535H275V555L290,555 312,540 318,565 348,590V615L368,650 362,668 340,670 333,705 300,710 288,650V560M360,670 365,705H380L383,738 395,755 388,780H362L368,748 335,710M300,710 290,760 283,800 280,890 272,960 265,1060 258,1160 262,1200H288M300,400 322,395 325,370 350,340M355,390H395L412,352M218,395 245,420M372,820 398,850 402,875M657,128H685L690,60H715V20L740,0M715,45 735,75 805,158 862,98 885,100 950,152V120H1038M952,0V120M845,0V62L862,98M805,158V212L780,220M735,75 738,208 690,212 662,190M692,215V245L662,240M690,250 720,280 740,275 760,225 800,210M745,270H790L800,235 875,235 885,190 882,110M946,152V205L935,215 945,278 910,300 885,310M875,235 870,280 850,320M882,340 905,365 848,385M905,365 910,348 985,345 955,310 952,280 1010,275 1045,150M1010,275 1020,320 1045,362 1068,370V430M1045,220 1075,225M1083,262 1115,308 1068,370M1122,265V300M805,235 795,325M757,268V345M720,285 724,352M985,345 995,365 985,415V480L998,520 980,525 975,565 930,555V510L895,487H865M985,430 1020,425 1055,470M998,520 1015,555 1060,555M1020,560 1015,600 1028,630M932,580H945V555L985,585M932,580V640L970,645 1010,600M860,638 970,650 958,655 985,708 955,750 925,770 918,705H925V645M1010,640V700L985,708 998,710 1003,760M893,795 915,802V705M862,480 890,470 905,365M1080,180 1145,162 1150,190M1145,162 1175,140V105L1145,100M1128,30 1105,0M1210,0 1222,70M1275,35 1300,0M1265,95 1280,80 1275,35M1345,0 1400,50 1450,35 1475,35 1470,60 1440,90 1430,120M1400,60V120M1475,90 1495,115 1475,150 1470,170 1478,255M1490,115 1515,140 1540,215M1490,160 1515,180 1530,225H1505";

function Shapes({ shapes, borders }: { shapes: Shape[]; borders: string }) {
  return (
    <>
      {shapes.map(([fill, d], i) => (
        <path key={i} d={d} fill={fill} />
      ))}
      <path d={borders} fill="none" stroke="#232f42" strokeWidth="1.3" vectorEffect="non-scaling-stroke" />
    </>
  );
}

function WorldMap() {
  return (
    <svg viewBox="718 780 1232 1344" preserveAspectRatio="xMidYMid slice" className="block h-full w-full" role="img" aria-label="Requests by country">
      <defs>
        <filter id="coast" x="0" y="0" width="3800" height="2200" filterUnits="userSpaceOnUse">
          <feTurbulence type="fractalNoise" baseFrequency="0.09" numOctaves="3" seed="7" />
          <feDisplacementMap in="SourceGraphic" scale="11" xChannelSelector="R" yChannelSelector="G" />
        </filter>
        <filter id="coast-soft" x="0" y="0" width="3800" height="2200" filterUnits="userSpaceOnUse">
          <feTurbulence type="fractalNoise" baseFrequency="0.07" numOctaves="2" seed="3" />
          <feDisplacementMap in="SourceGraphic" scale="6" xChannelSelector="R" yChannelSelector="G" />
        </filter>
      </defs>
      <rect x="718" y="780" width="1232" height="1344" fill={SEA} />
      <g filter="url(#coast-soft)">
        <g transform="translate(710 1450) scale(.8036 .44)">
          <Shapes shapes={south} borders={bordersSouth} />
        </g>
      </g>
      <g filter="url(#coast)">
        <g transform="translate(710 770) scale(.3954 .4337)">
          <Shapes shapes={northWest} borders={bordersNorthWest} />
          <g fill="none" stroke={SEA} strokeWidth="9">
            <path d="M262,20 285,85 330,118 390,125 440,100 475,88M300,118 325,175 362,210 322,240 308,285M378,130 410,182M435,95 470,42M280,80 350,62M350,240 400,238M500,235 450,205M455,250 480,222" />
            <path strokeWidth="5" d="M1290,25 1240,105M1310,105 1345,112M1185,540 1235,575 1258,605M1165,605 1225,640 1200,655 1170,662M1215,635 1260,668M800,622 830,632M805,650 850,685M60,555 75,640M345,600 345,520M415,530 420,600M650,900 600,895M640,830 600,800M1285,150 1300,175M1275,240 1320,250" />
          </g>
        </g>
        <g transform="translate(1330 770) scale(.4082 .4337)">
          <Shapes shapes={northEast} borders={bordersNorthEast} />
          <path d={seaNorthEast} fill={SEA} />
        </g>
      </g>
    </svg>
  );
}

function MapLegend() {
  return (
    <div className="absolute bottom-[54px] left-[14px] w-[216px]">
      <svg viewBox="0 0 216 66" className="block h-[66px] w-full" aria-hidden="true">
        <defs>
          <linearGradient id="hist" x1="0" x2="1" y1="0" y2="0">
            <stop offset="0" stopColor="#2c3038" />
            <stop offset="1" stopColor="#5b93f5" />
          </linearGradient>
        </defs>
        <path
          d="M.5,65V1C4,-1 6,8 7,16 9,30 13,39 19,45 24,53 25,58 30,57 37,56 41,59 46,60 50,57 52,49 56,56 60,64 64,65 74,61 80,59 88,58 95,61 102,60 107,62 111,65H215"
          fill="url(#hist)"
          stroke="#6d7076"
        />
      </svg>
      <div className="flex h-6 items-center justify-between rounded-r-sm bg-linear-to-r from-[#2f3440] to-[#5b93f5] px-1 font-['Liberation_Sans'] text-[17px] text-[#b4b4b4]">
        <span>0</span>
        <span>110.11M</span>
      </div>
      <svg viewBox="0 0 216 9" className="block h-[9px] w-full" stroke="#000" aria-hidden="true">
        <path d="M0,1H216" strokeWidth="2" />
        <path d="M1,1V9M65,1V9M92,1V9M113,1V9M130,1V9M146,1V9M160,1V9M172,1V9M184,1V9M195,1V9M206,1V9M215,1V9" />
      </svg>
    </div>
  );
}

function MapboxMark() {
  return (
    <div className="absolute bottom-4 left-3 flex items-center gap-1.5 text-white">
      <svg viewBox="0 0 32 32" className="size-8" aria-hidden="true">
        <circle cx="16" cy="16" r="15.500" fill="#fff" />
        <path d="M24.500 7.500c-4-3.800-10-3-13 .3-3.500 4-3 10-3.500 16.200 6.500 0 12.500.3 16.300-3.500 3.400-3.600 3.700-9.500.2-13Z" fill="#222" />
        <path d="m18 8.500 1.700 3.800 3.800 1.700-3.800 1.700L18 19.500l-1.700-3.800-3.800-1.700 3.800-1.700Z" fill="#fff" />
      </svg>
      <span className="text-[27px] leading-8 font-medium">mapbox</span>
    </div>
  );
}

/* -------------------------------------------------------------- sections */

function MetricBlock({ m }: { m: Metric }) {
  return (
    <div>
      <div className="text-[23px] leading-8 text-[#b3b3b3]">{m.label}</div>
      <div className="mt-2 text-[39px] leading-12 font-semibold text-[#f5f5f5]">{m.value}</div>
      <Sparkline tail={m.tail} className="mt-[14px] block h-[58px] w-full" />
    </div>
  );
}

function Header() {
  return (
    <header className="flex h-[107px] items-center justify-between border-b-2 border-[#313131] pr-7 pl-7 text-[25px] text-[#d9d9d9]">
      <a href="#home" aria-label="Cloudflare" className="flex flex-col items-end">
        <svg viewBox="0 0 86 39" className="h-[39px] w-[86px]" aria-hidden="true">
          <path
            d="M0 38.500C-.5 30 5 24.500 12.500 24 12 14.500 20 9.500 27.500 13.500 33 4 40 0 47 0 57 0 65 7.500 65.500 17c0 5-4 11-11 11L24 29.200v1l33 .300c2.500 1 3 4.500 1 8Z"
            fill="#e88b3c"
          />
          <path d="M68 17.500C79 17 87 27 85.500 38.500H60.500c1-5 4-7.500 9.500-8h8v-1L71 28c-5-1-6-7.500-3-10.500Z" fill="#f0b05b" />
        </svg>
        <span className="-mt-px font-['DejaVu_Sans'] text-2xl leading-8 font-bold text-white">CLOUDFLARE</span>
      </a>
      <div className="flex items-center">
        <button type="button" className="flex items-center gap-2.5">
          <svg viewBox="0 0 26 26" className="size-[26px]" fill="none" stroke="#8a8a8a" strokeWidth="2" aria-hidden="true">
            <circle cx="10" cy="10" r="8.500" />
            <path d="m16 16 8.500 9" strokeWidth="2.500" />
          </svg>
          Go to...
        </button>
        <button type="button" className="ml-[34px] flex h-[58px] items-center gap-2.5 rounded-md border-2 border-[#4a4a4a] px-4">
          <svg viewBox="0 0 20 20" className="size-5" stroke="currentColor" strokeWidth="1.8" aria-hidden="true">
            <path d="M10 0v20M0 10h20" />
          </svg>
          Add
          <Triangle className="h-3 w-6" />
        </button>
        <button type="button" className="ml-[34px] flex items-center gap-2">
          Support
          <Triangle className="h-3 w-6 text-[#9a9a9a]" />
        </button>
        <button type="button" className="ml-[56px] flex items-center gap-2">
          English
          <Triangle className="h-3 w-6 text-[#9a9a9a]" />
        </button>
        <button type="button" aria-label="Account menu" className="ml-[56px] flex items-center gap-5">
          <svg viewBox="0 0 26 27" className="h-[27px] w-[26px]" fill="#7f7f7f" aria-hidden="true">
            <ellipse cx="13" cy="7" rx="6.500" ry="7" />
            <path d="M0 25c0-6 5-9.500 13-9.500S26 19 26 25c0 1-.5 2-1.500 2h-23C.5 27 0 26 0 25Z" />
          </svg>
          <Triangle className="h-3 w-6 text-[#9a9a9a]" />
        </button>
      </div>
    </header>
  );
}

function Sidebar() {
  return (
    <nav aria-label="Account" className="w-24 shrink-0 self-start border-r-2 border-[#313131] text-[#386ee9]">
      <div className="flex h-[101px] items-center justify-center border-b-2 border-[#313131] bg-black">
        <button type="button" className="size-[62px] rounded-full border-2 border-[#386ee9] bg-[#05173b] text-2xl font-medium">
          Da
        </button>
      </div>
      <div className="flex flex-col border-b-2 border-[#313131] py-3.5">
        {navGroups.map((group, g) => (
          <React.Fragment key={g}>
            {g > 0 && <hr className="mx-3 mt-3.5 mb-[13px] border-t-2 border-[#313131]" />}
            <ul>
              {group.map((item) => (
                <li key={item.label}>
                  <a
                    href="#nav"
                    aria-label={item.label}
                    className={
                      item.active
                        ? "flex h-[71px] items-center justify-center border-y-2 border-[#0b2560] bg-[#04163c] pl-0.5"
                        : "flex h-[71px] items-center justify-center pl-0.5"
                    }
                  >
                    <Glyph>{item.icon}</Glyph>
                  </a>
                </li>
              ))}
            </ul>
          </React.Fragment>
        ))}
      </div>
      <div className="h-[187px]" />
      <button type="button" aria-label="Expand sidebar" className="flex h-[101px] w-full items-center justify-center border-t-2 border-[#313131] bg-black">
        <svg viewBox="0 0 20 18" className="h-[18px] w-5" fill="none" stroke="currentColor" strokeWidth="1.5" aria-hidden="true">
          <path d="m1 0 9 9-9 9M10 0l9 9-9 9" />
        </svg>
      </button>
    </nav>
  );
}

function PageHead() {
  return (
    <div className="flex items-start justify-between pr-3">
      <div className="w-[1100px]">
        <div className="text-[27px] leading-9 text-[#999]">Analytics &amp; Logs</div>
        <h1 className="mt-[3px] text-[51px] leading-[68px] font-semibold text-[#d9d9d9]">
          All sites for Delano@onetimesecret.com's account
        </h1>
        <a href="#docs" className="mt-[18px] inline-flex items-center gap-2.5 text-[#386ee9]">
          <span className="border-b-2 border-[#386ee9] text-[23px] leading-8">Account analytics documentation</span>
          <External className="size-[18px]" />
        </a>
      </div>
      <div className="mt-6 flex items-center gap-[63px]">
        <button type="button" className="flex items-center gap-[57px] text-[#386ee9]">
          <svg viewBox="0 0 16 18" className="h-[18px] w-4" fill="none" stroke="currentColor" strokeWidth="1.600" aria-hidden="true">
            <path d="M8 0v13M3.500 8.500 8 13l4.500-4.500M0 17h16" />
          </svg>
          <span className="text-[23px] leading-9">
            Download data for: All sites for account,
            <br />
            Previous 24 hours
          </span>
        </button>
        <div className="relative text-[23px] text-[#e6e6e6]">
          <select aria-label="Time range" className="block h-[58px] w-[338px] appearance-none rounded-md border-2 border-[#7c7c7c] bg-black pr-12 pl-[18px]">
            <option>Previous 24 hours</option>
          </select>
          <Triangle className="pointer-events-none absolute top-6 right-4 h-2.5 w-[18px] text-[#8c8c8c]" />
        </div>
      </div>
    </div>
  );
}

function CountryTable() {
  return (
    <div>
      <table className="w-full table-fixed border-collapse text-left text-[26px] text-[#d9d9d9]">
        <colgroup>
          <col className="w-[338px]" />
          <col className="w-[338px]" />
          <col />
        </colgroup>
        <thead>
          <tr className="h-[67px]">
            <th aria-label="Country" className="pl-[27px]" />
            <th className="pl-[27px] font-semibold">Requests</th>
            <th className="pl-[27px] font-semibold">Bandwidth</th>
          </tr>
        </thead>
        <tbody>
          {countries.map((c) => (
            <tr key={c.name} className="h-[100px] border-b-2 border-[#313131]">
              <td className="pl-[27px]">{c.name}</td>
              <td className="pl-[27px]">
                <div className="flex items-center gap-[30px]">
                  <span className="min-w-[120px] shrink-0">{c.req}</span>
                  <Sparkline tail={c.a} className="-mt-2.5 h-[58px] w-[132px]" />
                </div>
              </td>
              <td className="pl-[27px]">
                <div className="flex items-center gap-[30px]">
                  <span className="min-w-[120px] shrink-0">{c.bw}</span>
                  <Sparkline tail={c.b} className="-mt-2.5 h-[58px] w-[132px] shrink-0" />
                </div>
              </td>
            </tr>
          ))}
        </tbody>
      </table>
      <div className="mt-3 flex items-center gap-3.5 text-[26px] text-[#808080]">
        <button type="button" aria-label="Previous page" disabled className="flex size-[58px] items-center justify-center rounded-md border-2 border-[#313131] text-[#4a4a4a]">
          <svg viewBox="0 0 14 24" className="h-[22px] w-3.5" fill="none" stroke="currentColor" strokeWidth="2" aria-hidden="true">
            <path d="M13 1 1 12l12 11" />
          </svg>
        </button>
        <button type="button" aria-label="Next page" className="flex size-[58px] items-center justify-center rounded-md border-2 border-[#4a4a4a] text-[#386ee9]">
          <svg viewBox="0 0 14 24" className="h-[22px] w-3.5" fill="none" stroke="currentColor" strokeWidth="2" aria-hidden="true">
            <path d="m1 1 12 11L1 23" />
          </svg>
        </button>
        <p>
          <b className="font-semibold">1 to 10</b> of <b className="font-semibold">156</b> items
        </p>
      </div>
    </div>
  );
}

function NetworkCard() {
  return (
    <section className="rounded-lg border-2 border-[#3a3a3a] pt-7 pb-2.5">
      <h2 className="px-[54px] text-[32px] leading-10 font-semibold text-[#d9d9d9]">Network</h2>
      <div className="mt-1 grid grid-cols-3">
        {network.map((n, i) => (
          <div key={n.title} className={i < 2 ? "min-h-[353px] border-r-2 border-[#2c2c2c] px-[54px] pt-[30px]" : "px-[54px] pt-[30px]"}>
            <h3 className="text-[23px] leading-8 font-semibold text-[#d9d9d9]">{n.title}</h3>
            <dl className="mt-2 text-[23px] text-[#c8c8c8]">
              {n.rows.map(([name, value, pct]) => (
                <div key={name} className="flex h-[51px] items-center">
                  <dt className="grow">{name}</dt>
                  <dd className="flex items-center gap-3.5">
                    {value}
                    <span className="block h-[18px] w-[136px] bg-[#313131]">
                      <span className="block h-full bg-[#1d4eb8]" style={{ width: `${pct}%` }} />
                    </span>
                  </dd>
                </div>
              ))}
            </dl>
          </div>
        ))}
      </div>
    </section>
  );
}

function Footer() {
  return (
    <footer className="mt-[108px] border-t-2 border-[#313131] text-[23px] text-[#5c90f0]">
      <div className="mx-auto grid w-[1732px] grid-cols-[373px_346px_347px_320px_1fr] pt-20">
        {footer.map((col, i) => (
          <div key={col.title}>
            <h2 className="text-[26px] leading-10 font-semibold text-[#d9d9d9]">{col.title}</h2>
            <ul className="mt-[7px] flex flex-col">
              {col.links.map((l) => (
                <li key={l} className="max-w-[290px] py-[7px] leading-[35px]">
                  <a href="#link">
                    {l}
                    <External className="mb-2.5 ml-2.5 inline size-[18px]" />
                  </a>
                </li>
              ))}
            </ul>
            {i === 0 && (
              <div className="mt-5 flex gap-3.5 pl-[3px]">
                <a href="#twitter" aria-label="Twitter">
                  <svg viewBox="0 0 24 24" className="size-[33px]" fill="currentColor" aria-hidden="true">
                    <path d="M23.643 4.937c-.835.37-1.732.62-2.675.733.962-.576 1.700-1.490 2.048-2.578-.9.534-1.897.922-2.958 1.130-.85-.904-2.060-1.470-3.400-1.470-2.572 0-4.658 2.086-4.658 4.660 0 .364.042.718.120 1.060-3.873-.195-7.304-2.050-9.602-4.868-.4.690-.63 1.490-.63 2.342 0 1.616.823 3.043 2.072 3.878-.764-.025-1.482-.234-2.110-.583v.06c0 2.257 1.605 4.140 3.737 4.568-.392.106-.803.162-1.227.162-.3 0-.593-.028-.877-.082.593 1.850 2.313 3.198 4.352 3.234-1.595 1.250-3.604 1.995-5.786 1.995-.376 0-.747-.022-1.112-.065 2.062 1.323 4.510 2.093 7.140 2.093 8.570 0 13.255-7.098 13.255-13.254 0-.2-.005-.402-.014-.602.910-.658 1.700-1.477 2.323-2.410Z" />
                  </svg>
                </a>
                <a href="#facebook" aria-label="Facebook">
                  <svg viewBox="0 0 24 24" className="size-[33px]" fill="currentColor" aria-hidden="true">
                    <path d="M24 12.073C24 5.405 18.627 0 12 0S0 5.405 0 12.073C0 18.100 4.388 23.094 10.125 24v-8.437H7.078v-3.490h3.047v-2.660c0-3.025 1.792-4.697 4.533-4.697 1.312 0 2.686.236 2.686.236v2.971H15.830c-1.491 0-1.956.930-1.956 1.886v2.264h3.328l-.532 3.490h-2.796V24C19.612 23.094 24 18.100 24 12.073Z" />
                  </svg>
                </a>
                <a href="#linkedin" aria-label="LinkedIn">
                  <svg viewBox="0 0 24 24" className="size-[33px]" fill="currentColor" aria-hidden="true">
                    <path d="M21.500 1h-19C1.700 1 1 1.700 1 2.500v19c0 .8.700 1.500 1.500 1.500h19c.8 0 1.500-.7 1.500-1.500v-19c0-.8-.7-1.500-1.500-1.500ZM7.700 19.700H4.400V9.300h3.300ZM6 7.800a1.900 1.900 0 1 1 0-3.800 1.900 1.900 0 0 1 0 3.800Zm13.700 11.900h-3.200v-5c0-1.300 0-2.800-1.700-2.800s-2 1.300-2 2.700v5.100H9.600V9.300h3.100v1.400c.5-.9 1.500-1.700 3.100-1.700 3.300 0 3.900 2.200 3.900 5Z" />
                  </svg>
                </a>
              </div>
            )}
          </div>
        ))}
      </div>
      <div className="mx-auto mt-[46px] flex w-[1732px] pb-[54px]">
        <button type="button" className="flex items-center gap-3.5 leading-8">
          <svg viewBox="0 0 53 26" className="h-[26px] w-[53px]" aria-hidden="true">
            <rect width="53" height="26" rx="13" fill="#2563f0" />
            <path d="M13 2.500h16.500L25 23.500H13a10.500 10.500 0 0 1 0-21Z" fill="#fff" />
            <path d="m10 13.500 4 4.500 8-10" fill="none" stroke="#2563f0" strokeWidth="2.600" />
            <path d="m34 8 10 10.500M44 8 34 18.500" fill="none" stroke="#fff" strokeWidth="2.600" />
          </svg>
          Cookie Preferences
        </button>
      </div>
    </footer>
  );
}

export default function App() {
  return (
    <div className="min-h-screen bg-[#1d1d1d] font-['Inter',sans-serif]">
      <Header />
      <div className="flex">
        <Sidebar />
        <div className="min-w-0 grow">
          <main className="mx-auto w-full max-w-[2137px] pt-[57px]">
            <PageHead />
            <div className="px-[27px]">
              <section aria-label="Totals" className="mt-14 grid grid-cols-4 gap-[55px]">
                {totals.map((m) => (
                  <MetricBlock key={m.label} m={m} />
                ))}
              </section>
              <section aria-label="Traffic by country" className="mt-[52px] grid grid-cols-[1042fr_1014fr] gap-[27px]">
                <div className="relative h-[1137px] overflow-hidden">
                  <WorldMap />
                  <div className="absolute top-[18px] right-[18px] flex w-11 flex-col rounded-sm bg-[#f2f2f2] text-black shadow">
                    <button type="button" aria-label="Zoom in" className="flex h-[43px] items-center justify-center border-b-2 border-[#d4d4d4]">
                      <svg viewBox="0 0 14 14" className="size-3.5" stroke="currentColor" strokeWidth="3.200" aria-hidden="true"><path d="M7 0v14M0 7h14" /></svg>
                    </button>
                    <button type="button" aria-label="Zoom out" className="flex h-[45px] items-center justify-center">
                      <svg viewBox="0 0 14 14" className="size-3.5" stroke="currentColor" strokeWidth="3.200" aria-hidden="true"><path d="M0 7h14" /></svg>
                    </button>
                  </div>
                  <MapLegend />
                  <MapboxMark />
                  <button type="button" aria-label="Attribution" className="absolute right-4 bottom-[17px]">
                    <svg viewBox="0 0 42 42" className="size-[42px]" aria-hidden="true">
                      <circle cx="21" cy="21" r="16.500" fill="#262626" stroke="#919191" strokeWidth="8.500" />
                      <circle cx="21" cy="14.500" r="2.600" fill="#919191" />
                      <path d="M18 19h5v7.500h1.500V29h-7v-2.500H19v-5h-1Z" fill="#919191" />
                    </svg>
                  </button>
                </div>
                <CountryTable />
              </section>
              <div className="mt-[52px] flex flex-col gap-[55px]">
                {cards.map((c) => (
                  <section key={c.title} className="rounded-lg border-2 border-[#3a3a3a] px-[54px] pt-7 pb-[52px]">
                    <h2 className="text-[32px] leading-10 font-semibold text-[#d9d9d9]">{c.title}</h2>
                    <div className="mt-[30px] grid grid-cols-4 gap-[55px]">
                      {c.metrics.map((m) => (
                        <MetricBlock key={m.label} m={m} />
                      ))}
                    </div>
                  </section>
                ))}
                <NetworkCard />
              </div>
            </div>
          </main>
          <Footer />
        </div>
      </div>
    </div>
  );
}
